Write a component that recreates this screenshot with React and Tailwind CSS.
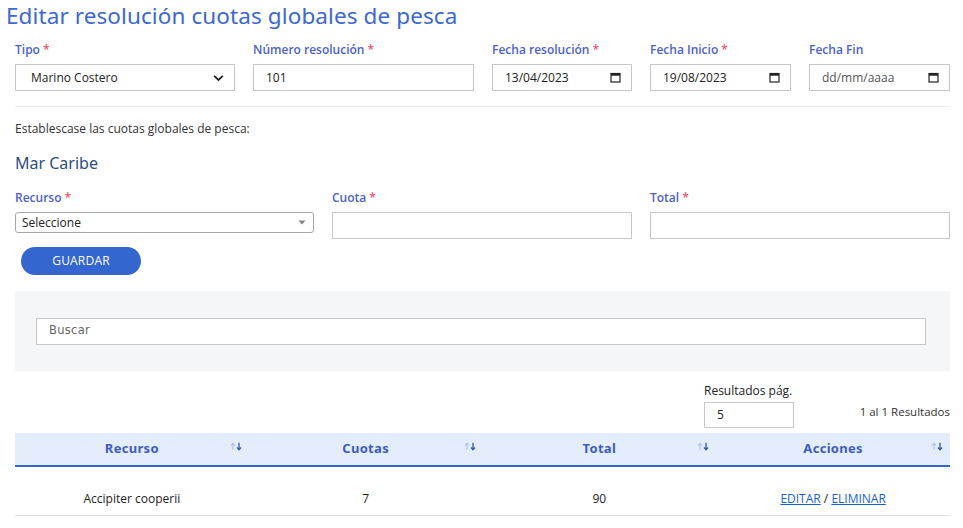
const label = 'text-[12px] font-semibold text-[#4c5fd0] leading-none'
const body = { fontFamily: '"Open Sans", "Noto Sans", sans-serif' }
const display = { fontFamily: '"Noto Sans", "Open Sans", sans-serif' }

function Req() {
  return <span className="text-[#f0506e] ml-[3px]">*</span>
}

function CalendarIcon() {
  return (
    <svg width="11" height="11" viewBox="0 0 11 11" className="shrink-0">
      <rect x="1" y="1.5" width="9" height="8.5" fill="none" stroke="#222" strokeWidth="1.2" />
      <rect x="1" y="1.5" width="9" height="2.2" fill="#222" />
    </svg>
  )
}

function DateBox({ value, muted }) {
  return (
    <div className="h-[27px] border border-[#c8c8c8] bg-white flex items-center justify-between pl-[12px] pr-[10px]">
      <span className={`text-[12px] ${muted ? 'text-[#555]' : 'text-[#222]'}`}>{value}</span>
      <CalendarIcon />
    </div>
  )
}

function SortIcon() {
  return (
    <svg width="12" height="9" viewBox="0 0 12 9" className="shrink-0">
      <path d="M3 8V1.5M1 3.5L3 1.3 5 3.5" fill="none" stroke="#a9c0ef" strokeWidth="1.1" />
      <path d="M9 0.8V7.5M7 5.5L9 7.7 11 5.5" fill="none" stroke="#3157b8" strokeWidth="1.3" />
    </svg>
  )
}

function HeadCell({ children }) {
  return (
    <div className="relative flex items-center justify-center h-full">
      <span className="text-[13px] font-bold text-[#3e5cc0] tracking-[0.3px]" style={display}>{children}</span>
      <div className="absolute right-[7px] top-[9px]">
        <SortIcon />
      </div>
    </div>
  )
}

export default function App() {
  return (
    <div className="w-[963px] h-[528px] bg-white overflow-hidden" style={body}>
      <h1 className="pl-[6px] pt-[1px] text-[22.5px] leading-[30px] text-[#3d67d4] tracking-[0.1px]" style={display}>
        Editar resolución cuotas globales de pesca
      </h1>

      <div className="pl-[15px]">
        <div className="grid grid-cols-[220px_221px_140px_141px_141px] gap-x-[18px] mt-[13px]">
          <div>
            <div className={label}>Tipo<Req /></div>
            <div className="mt-[8px] h-[27px] border border-[#c8c8c8] bg-white flex items-center justify-between pl-[15px] pr-[10px]">
              <span className="text-[12px] text-[#222]">Marino Costero</span>
              <svg width="11" height="8" viewBox="0 0 11 8">
                <path d="M1.2 1.8L5.5 6 9.8 1.8" fill="none" stroke="#222" strokeWidth="1.8" />
              </svg>
            </div>
          </div>
          <div>
            <div className={label}>Número resolución<Req /></div>
            <div className="mt-[8px] h-[27px] border border-[#c8c8c8] bg-white flex items-center pl-[12px]">
              <span className="text-[12px] text-[#222]">101</span>
            </div>
          </div>
          <div>
            <div className={label}>Fecha resolución<Req /></div>
            <div className="mt-[8px]"><DateBox value="13/04/2023" /></div>
          </div>
          <div>
            <div className={label}>Fecha Inicio<Req /></div>
            <div className="mt-[8px]"><DateBox value="19/08/2023" /></div>
          </div>
          <div>
            <div className={label}>Fecha Fin</div>
            <div className="mt-[8px]"><DateBox value="dd/mm/aaaa" muted /></div>
          </div>
        </div>

        <div className="w-[935px] border-t border-[#ececec] mt-[15px]" />

        <p className="text-[12px] text-[#333] mt-[16px] leading-none">Establescase las cuotas globales de pesca:</p>

        <h2 className="text-[16px] text-[#2d4d86] mt-[20px] leading-none" style={display}>Mar Caribe</h2>

        <div className="grid grid-cols-[299px_300px_300px] gap-x-[18px] w-[935px] mt-[21px]">
          <div>
            <div className={label}>Recurso<Req /></div>
            <div className="mt-[8px] h-[21px] border border-[#a6a6a6] rounded-[3px] bg-white flex items-center justify-between pl-[6px] pr-[7px]">
              <span className="text-[12px] text-[#222]">Seleccione</span>
              <svg width="8" height="5" viewBox="0 0 8 5">
                <path d="M0.5 0.5H7.5L4 4.5Z" fill="#888" />
              </svg>
            </div>
          </div>
          <div>
            <div className={label}>Cuota<Req /></div>
            <div className="mt-[8px] h-[27px] border border-[#c8c8c8] bg-white" />
          </div>
          <div>
            <div className={label}>Total<Req /></div>
            <div className="mt-[8px] h-[27px] border border-[#c8c8c8] bg-white" />
          </div>
        </div>

        <button className="mt-[8px] ml-[6px] w-[120px] h-[28px] rounded-full bg-[#3366cf] text-white text-[12px] tracking-[0.2px]">
          GUARDAR
        </button>

        <div className="w-[935px] h-[80px] bg-[#f5f6f8] mt-[16px] flex items-center pl-[21px] pr-[24px]">
          <div className="w-full h-[27px] border border-[#c8c8c8] bg-white flex items-center pl-[12px]">
            <span className="text-[#666] tracking-[0.3px]" style={{ fontFamily: '"DejaVu Sans", sans-serif', fontSize: '11.5px' }}>Buscar</span>
          </div>
        </div>

        <div className="w-[935px] flex items-end justify-end mt-[14px]">
          <div>
            <div className="text-[12px] text-[#222] leading-none">Resultados pág.</div>
            <div className="mt-[5px] w-[90px] h-[26px] border border-[#c8c8c8] bg-white flex items-center pl-[12px]">
              <span className="text-[12px] text-[#222]">5</span>
            </div>
          </div>
          <div className="w-[156px] text-right mb-[8px] text-[11.5px] text-[#333]">1 al 1 Resultados</div>
        </div>

        <div className="w-[935px] mt-[5px]">
          <div className="grid grid-cols-4 h-[34px] bg-[#e3edfc] border-b-2 border-[#3366cf]">
            <HeadCell>Recurso</HeadCell>
            <HeadCell>Cuotas</HeadCell>
            <HeadCell>Total</HeadCell>
            <HeadCell>Acciones</HeadCell>
          </div>
          <div className="grid grid-cols-4 h-[49px] border-b border-[#dedede] items-end pb-[7px] text-[12px] text-[#222]">
            <div className="text-center">Accipiter cooperii</div>
            <div className="text-center">7</div>
            <div className="text-center">90</div>
            <div className="text-center">
              <a className="text-[#1a5fd8] underline">EDITAR</a>
              <span> / </span>
              <a className="text-[#1a5fd8] underline">ELIMINAR</a>
            </div>
          </div>
        </div>
      </div>
    </div>
  )
}
